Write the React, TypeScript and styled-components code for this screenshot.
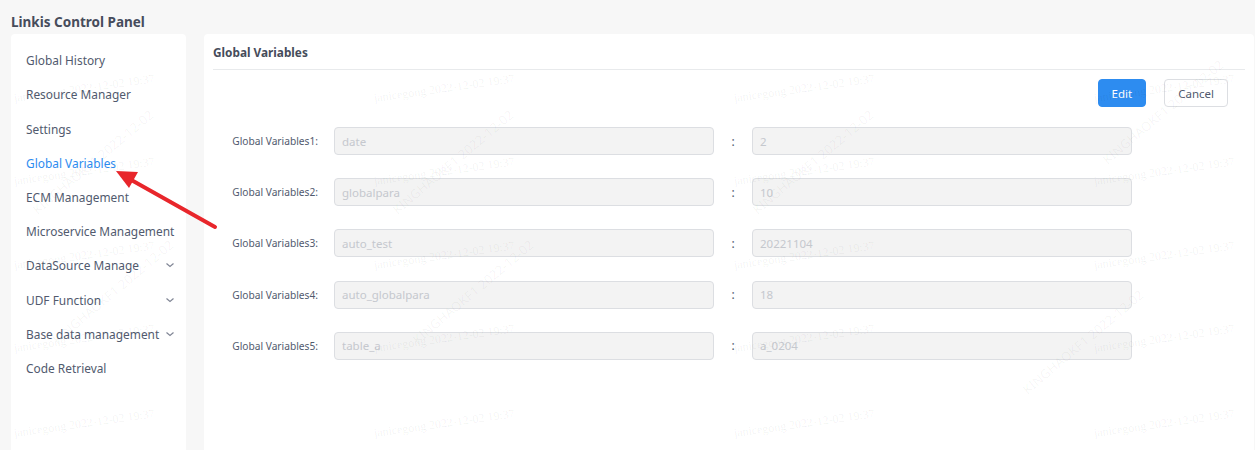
import React from 'react';
import styled, { createGlobalStyle } from 'styled-components';

const GlobalStyle = createGlobalStyle`
    html, body {
        margin: 0;
        padding: 0;
        background: #f7f7f7;
        font-family: "Noto Sans", "Open Sans", sans-serif;
    }
`;

const Page = styled.div`
    position: relative;
    height: 450px;
    overflow: hidden;
    padding: 0 1px 0 11px;
    box-sizing: border-box;
`;

const PageTitle = styled.h1`
    margin: 0;
    padding-top: 13px;
    height: 21px;
    line-height: 18px;

    font-size: 13.5px;
    font-weight: 700;
    color: #464c5b;
`;

const Body = styled.div`
    display: flex;
    gap: 18px;
    height: 416px;
`;

const Sidebar = styled.nav`
    width: 175px;
    flex-shrink: 0;
    padding-top: 9px;

    background: #fff;
    border-radius: 4px 4px 0 0;
`;

const MenuItem = styled.div<{ $active?: boolean }>`
    display: flex;
    align-items: center;
    justify-content: space-between;
    height: 34.22px;
    padding: 0 11px 0 15px;

    font-size: 11.9px;
    color: ${p => (p.$active ? '#2d8cf0' : '#515a6e')};
    white-space: nowrap;
`;

const Content = styled.main`
    flex: 1;
    padding: 0 9px;

    background: #fff;
    border-radius: 4px 4px 0 0;
`;

const ContentHeader = styled.h2`
    margin: 0;
    height: 35px;
    line-height: 37px;

    font-size: 11.8px;
    font-weight: 700;
    color: #464c5b;
    border-bottom: 1px solid #e8eaec;
`;

const Toolbar = styled.div`
    display: flex;
    justify-content: flex-end;
    gap: 18px;
    padding: 9px 17px 0 0;
`;

const Button = styled.button<{ $primary?: boolean }>`
    height: 28px;
    padding: 0 13px;

    font-family: inherit;
    font-size: 11.5px;
    border-radius: 4px;
    border: 1px solid ${p => (p.$primary ? '#2d8cf0' : '#dcdee2')};
    background: ${p => (p.$primary ? '#2d8cf0' : '#fff')};
    color: ${p => (p.$primary ? '#fff' : '#515a6e')};
`;

const Form = styled.div`
    display: flex;
    flex-direction: column;
    gap: 23.2px;
    padding-top: 20px;
`;

const Row = styled.div`
    display: flex;
    align-items: center;
`;

const Label = styled.label`
    width: 105px;
    padding-right: 16px;

    font-size: 10.2px;
    color: #515a6e;
    text-align: right;
    white-space: nowrap;
`;

const Field = styled.input`
    width: 380px;
    height: 28px;
    padding: 0 7px;
    box-sizing: border-box;

    font-family: inherit;
    font-size: 11.5px;
    color: #c5c8ce;
    background: #f3f3f3;
    border: 1px solid #dcdee2;
    border-radius: 4px;
`;

const Colon = styled.span`
    width: 38px;
    text-align: center;

    font-size: 12px;
    color: #515a6e;
`;

const Overlay = styled.div`
    position: absolute;
    inset: 0;
    pointer-events: none;
`;

const Mark = styled.span<{ $diag?: boolean }>`
    position: absolute;
    font-family: ${p => (p.$diag ? '"Noto Sans", sans-serif' : '"Liberation Serif", serif')};
    font-size: ${p => (p.$diag ? '13px' : '12px')};
    color: ${p => (p.$diag ? 'rgba(0, 0, 0, 0.045)' : 'rgba(0, 0, 0, 0.06)')};
    white-space: nowrap;
    transform: rotate(${p => (p.$diag ? '-40deg' : '-8deg')});
    transform-origin: left bottom;
`;

const Arrow = styled.svg`
    position: absolute;
    left: 100px;
    top: 160px;
`;

const Chevron = () => (
    <svg width="10" height="10" viewBox="0 0 10 10">
        <path d="M1.5 3.5 L5 6.5 L8.5 3.5" fill="none" stroke="#808695" strokeWidth="1.2" />
    </svg>
);

const menu = [
    { name: 'Global History' },
    { name: 'Resource Manager' },
    { name: 'Settings' },
    { name: 'Global Variables', active: true },
    { name: 'ECM Management' },
    { name: 'Microservice Management' },
    { name: 'DataSource Manage', sub: true },
    { name: 'UDF Function', sub: true },
    { name: 'Base data management', sub: true },
    { name: 'Code Retrieval' },
];

const vars = [
    ['date', '2'],
    ['globalpara', '10'],
    ['auto_test', '20221104'],
    ['auto_globalpara', '18'],
    ['table_a', 'a_0204'],
];

const markCols = [15, 375, 735, 1095];
const markRows = [105, 188, 272, 355, 440];
const diagMarks = [
    [40, 200], [400, 200], [760, 200], [1110, 150],
    [60, 330], [420, 330], [1030, 380],
];

export default function App() {
    return (
        <Page>
            <GlobalStyle />
            <PageTitle>Linkis Control Panel</PageTitle>
            <Body>
                <Sidebar>
                    {menu.map(m => (
                        <MenuItem key={m.name} $active={m.active}>
                            {m.name}
                            {m.sub && <Chevron />}
                        </MenuItem>
                    ))}
                </Sidebar>
                <Content>
                    <ContentHeader>Global Variables</ContentHeader>
                    <Toolbar>
                        <Button $primary>Edit</Button>
                        <Button>Cancel</Button>
                    </Toolbar>
                    <Form>
                        {vars.map(([k, v], i) => (
                            <Row key={k}>
                                <Label>Global Variables{i + 1}:</Label>
                                <Field disabled value={k} readOnly />
                                <Colon>:</Colon>
                                <Field disabled value={v} readOnly />
                            </Row>
                        ))}
                    </Form>
                </Content>
            </Body>
            <Overlay>
                {markCols.map(x =>
                    markRows.map(y => (
                        <Mark key={`${x}-${y}`} style={{ left: x, top: y - 14 }}>
                            janicegong 2022-12-02 19:37
                        </Mark>
                    ))
                )}
                {diagMarks.map(([x, y]) => (
                    <Mark $diag key={`d${x}-${y}`} style={{ left: x, top: y }}>
                        KINGHAOKF1 2022-12-02
                    </Mark>
                ))}
            </Overlay>
            <Arrow width="130" height="80" viewBox="0 0 130 80">
                <line x1="115" y1="67" x2="26" y2="17" stroke="#e8262b" strokeWidth="4" strokeLinecap="round" />
                <polygon points="16,11 38,12 29,28" fill="#e8262b" />
            </Arrow>
        </Page>
    );
}
